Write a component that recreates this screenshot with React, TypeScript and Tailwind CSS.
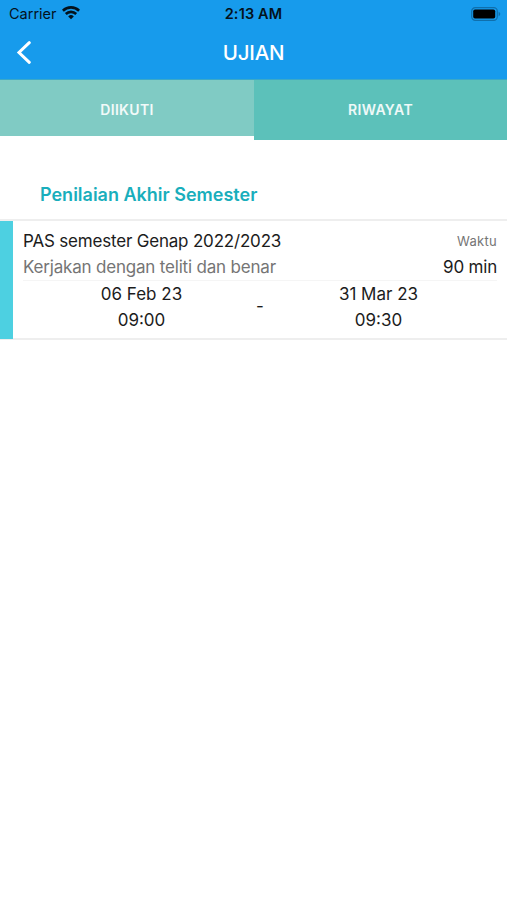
const exam = {
  title: "PAS semester Genap 2022/2023",
  note: "Kerjakan dengan teliti dan benar",
  duration: "90 min",
  start: { date: "06 Feb 23", time: "09:00" },
  end: { date: "31 Mar 23", time: "09:30" },
};

function WifiIcon() {
  return (
    <svg width="18" height="14" viewBox="0 0 18 14" fill="none" stroke="#04121c" strokeWidth="2.6">
      <path d="M0.9 4.7a11.6 11.6 0 0 1 16.2 0" />
      <path d="M3.8 8a7.4 7.4 0 0 1 10.4 0" />
      <path d="M9 13.2 6.2 10.4a4 4 0 0 1 5.6 0Z" fill="#04121c" stroke="none" />
    </svg>
  );
}

function BatteryIcon() {
  return (
    <svg width="30" height="14" viewBox="0 0 30 14" fill="none">
      <rect x="0.7" y="0.7" width="25.6" height="12.6" rx="3.6" stroke="#0f6fac" strokeWidth="1.2" />
      <rect x="2.2" y="2.4" width="22" height="9.2" rx="1.8" fill="#000" />
      <path d="M27.6 4.8c2.2.8 2.2 3.6 0 4.4Z" fill="#0f6fac" />
    </svg>
  );
}

function StatusBar() {
  return (
    <div className="grid h-[27px] grid-cols-3 items-center pr-[6px] pl-[9px] text-[#04121c]">
      <div className="flex items-center gap-[5px]">
        <span className="text-[14.5px]">Carrier</span>
        <div className="pb-px">
          <WifiIcon />
        </div>
      </div>
      <span className="pr-[3px] text-center text-[14.5px] font-semibold tracking-[0.15px]">2:13 AM</span>
      <div className="flex justify-end">
        <BatteryIcon />
      </div>
    </div>
  );
}

function Header() {
  return (
    <header className="h-[79px] bg-[#179bec]">
      <StatusBar />
      <div className="grid h-[51px] grid-cols-3 items-center px-4">
        <button aria-label="Kembali">
          <svg width="16" height="24" viewBox="0 0 16 24" fill="none" stroke="#fff" strokeWidth="3">
            <path d="M13.3 1.7 3 11.5l10.3 9.8" strokeLinecap="round" />
          </svg>
        </button>
        <h1 className="pt-[2px] text-center text-[20.5px] font-medium tracking-[-0.2px] text-white">UJIAN</h1>
      </div>
    </header>
  );
}

function Tabs() {
  return (
    <div className="flex h-[61px] items-start border-t border-[#3aa9c8] text-[14px] font-semibold tracking-[0.35px] text-white/90">
      <button className="h-[56px] w-[254px] bg-[#80cbc4] pt-[3px]">DIIKUTI</button>
      <button className="h-[60px] flex-1 bg-[#5cc1ba] pb-px">RIWAYAT</button>
    </div>
  );
}

function Schedule({ date, time }: { date: string; time: string }) {
  return (
    <div className="w-[237px] text-center">
      <p>{date}</p>
      <p>{time}</p>
    </div>
  );
}

function ExamCard() {
  return (
    <div className="h-[121px] border-y-2 border-[#eeeeee]">
      <div className="-mb-px flex h-[118px] border-l-[13px] border-[#4dd0e1] pr-[10px] pl-[10px] text-[17px] leading-[26px] text-[#1c1c1c]">
        <div className="flex-1 pt-[7px]">
          <div className="flex justify-between">
            <p className="tracking-[-0.19px]">{exam.title}</p>
            <p className="text-[13px] tracking-[0.3px] text-[#757575]">Waktu</p>
          </div>
          <div className="flex justify-between border-b border-[#f5f5f5] tracking-[-0.19px]">
            <p className="text-[#757575]">{exam.note}</p>
            <p>{exam.duration}</p>
          </div>
          <div className="flex items-center">
            <Schedule date={exam.start.date} time={exam.start.time} />
            <span className="-ml-[3px] w-[3px] -indent-[1px] pb-[2px]">-</span>
            <Schedule date={exam.end.date} time={exam.end.time} />
          </div>
        </div>
      </div>
    </div>
  );
}

export default function App() {
  return (
    <div className="min-h-screen bg-white font-['Inter',sans-serif]">
      <Header />
      <Tabs />
      <h2 className="flex h-[79px] items-center pt-[29px] pl-[40px] text-[18px] font-semibold text-[#19aebc]">
        Penilaian Akhir Semester
      </h2>
      <ExamCard />
    </div>
  );
}
